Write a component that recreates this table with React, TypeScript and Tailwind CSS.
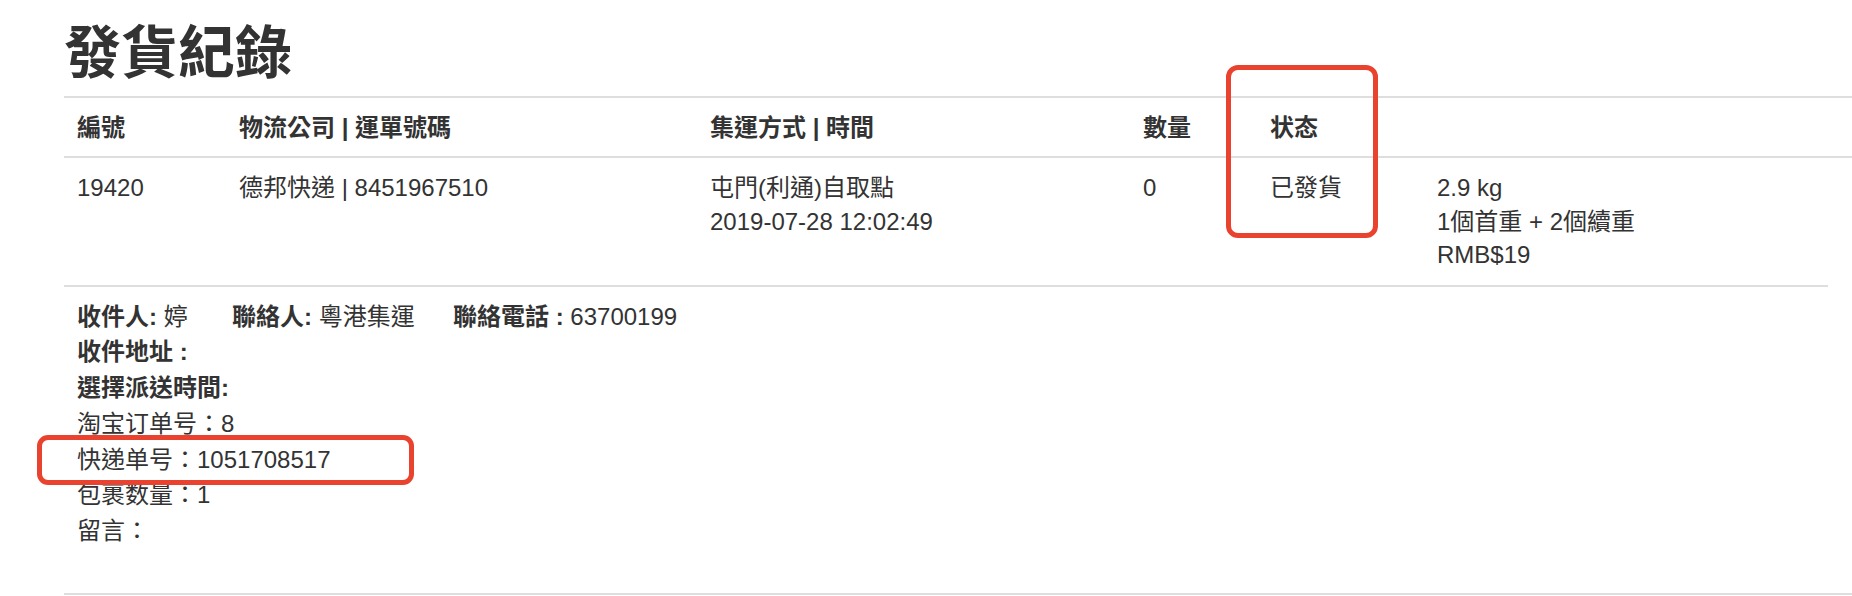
import React from 'react';

const cols = 'grid grid-cols-[162px_471px_433px_127px_167px_1fr]';

export default function App() {
  return (
    <div
      className="relative w-full h-[596px] overflow-hidden bg-white pl-[64px] text-[#333] text-[24px]"
      style={{ fontFamily: '"Liberation Sans", "Noto Sans CJK TC", sans-serif' }}
    >
      {/* Title */}
      <h1 className="pt-[25px] pb-[14px] text-[57px] leading-[57px] font-bold">發貨紀錄</h1>

      {/* Shipment table */}
      <div className="border-t-2 border-[#dedede]">
        <div className={`${cols} border-b-2 border-[#dedede] font-bold leading-[33px]`}>
          <div className="px-[13px] py-[12.5px]">編號</div>
          <div className="px-[13px] py-[12.5px]">物流公司 | 運單號碼</div>
          <div className="px-[13px] py-[12.5px]">集運方式 | 時間</div>
          <div className="px-[13px] py-[12.5px]">數量</div>
          <div className="px-[13px] py-[12.5px]">状态</div>
          <div className="px-[13px] py-[12.5px]"></div>
        </div>
        <div className={`${cols} leading-[33.5px]`}>
          <div className="px-[13px] py-[13px]">19420</div>
          <div className="px-[13px] py-[13px]">德邦快递 | 8451967510</div>
          <div className="px-[13px] py-[13px]">
            <div>屯門(利通)自取點</div>
            <div>2019-07-28 12:02:49</div>
          </div>
          <div className="px-[13px] py-[13px]">0</div>
          <div className="px-[13px] py-[13px]">已發貨</div>
          <div className="px-[13px] py-[13px]">
            <div>2.9 kg</div>
            <div>1個首重 + 2個續重</div>
            <div>RMB$19</div>
          </div>
        </div>
        <div className="mr-[24px] border-t-2 border-[#dedede]" />
      </div>

      {/* Receiver details */}
      <div className="border-b-2 border-[#dedede] px-[13px] pt-[12px] pb-[44px] leading-[35.8px]">
        <div className="flex">
          <span className="w-[155px]">
            <b>收件人:</b> 婷
          </span>
          <span className="w-[221px]">
            <b>聯絡人:</b> 粵港集運
          </span>
          <span>
            <b>聯絡電話 :</b> 63700199
          </span>
        </div>
        <div>
          <b>收件地址 :</b>
        </div>
        <div>
          <b>選擇派送時間:</b>
        </div>
        <div>淘宝订单号：8</div>
        <div>快递单号：1051708517</div>
        <div>包裹数量：1</div>
        <div>留言：</div>
      </div>

      {/* Highlight marks */}
      <div className="absolute left-[1226px] top-[65px] w-[152px] h-[173px] rounded-[12px] border-[5px] border-[#e9432f]" />
      <div className="absolute left-[37px] top-[435px] w-[377px] h-[50px] rounded-[11px] border-[5px] border-[#e9432f]" />
    </div>
  );
}
